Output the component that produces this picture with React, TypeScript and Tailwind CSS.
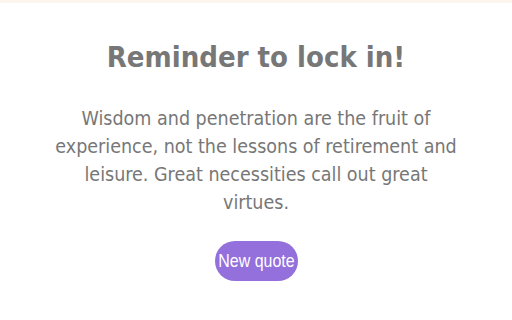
import React from 'react';

const quote =
  'Wisdom and penetration are the fruit of experience, not the lessons of retirement and leisure. Great necessities call out great virtues.';

export default function App() {
  const [text] = React.useState<string>(quote);

  return (
    <div className="w-full min-h-screen bg-white">
      <div className="h-[3px] bg-[#fdf6ee]" />
      <div className="flex flex-col items-center pt-[34px]">
        <h1 className="text-[29px] font-bold text-[#777777] font-['DejaVu_Sans_Condensed','DejaVu_Sans',sans-serif] leading-[40px]">
          Reminder to lock in!
        </h1>
        <p className="mt-[28px] w-[408px] text-center text-[19.5px] leading-[28px] text-[#777777] font-['DejaVu_Sans_Condensed','DejaVu_Sans',sans-serif]">
          {text}
        </p>
        <button className="mt-[24px] h-[40px] w-[83px] rounded-full bg-[#9370db] text-white text-[19px] font-['Liberation_Sans',sans-serif] flex items-center justify-center">
          <span className="inline-block scale-x-[0.84] whitespace-nowrap">New quote</span>
        </button>
      </div>
    </div>
  );
}
